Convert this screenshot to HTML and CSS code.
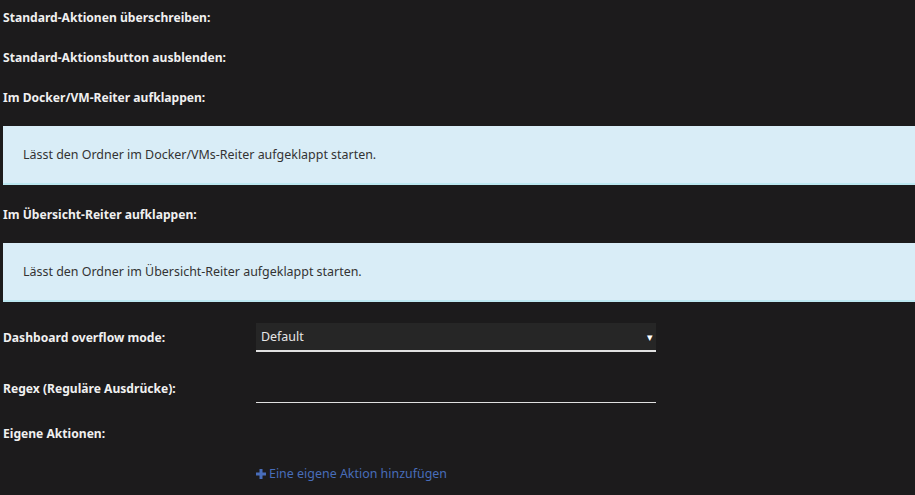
FILE: index.html
```html
<!DOCTYPE html>
<html lang="de">
<head>
  <meta charset="UTF-8">
  <title>Ordner-Einstellungen</title>
  <link rel="stylesheet" href="styles.css">
</head>
<body>
  <form class="settings">
    <div class="field"><span class="label">Standard-Aktionen überschreiben:</span></div>
    <div class="field"><span class="label">Standard-Aktionsbutton ausblenden:</span></div>
    <div class="field"><span class="label">Im Docker/VM-Reiter aufklappen:</span></div>
    <div class="info">Lässt den Ordner im Docker/VMs-Reiter aufgeklappt starten.</div>

    <div class="field field-spaced"><span class="label">Im Übersicht-Reiter aufklappen:</span></div>
    <div class="info">Lässt den Ordner im Übersicht-Reiter aufgeklappt starten.</div>

    <div class="field-row select-row">
      <span class="label">Dashboard overflow mode:</span>
      <div class="select">
        <span>Default</span>
        <span class="arrow">▾</span>
      </div>
    </div>

    <div class="field-row input-row">
      <span class="label">Regex (Reguläre Ausdrücke):</span>
      <div class="text-input"></div>
    </div>

    <div class="field custom-label"><span class="label">Eigene Aktionen:</span></div>

    <div class="add-row">
      <a class="add-action" href="#">
        <svg width="10" height="10" viewBox="0 0 10 10"><path d="M3.5 0h3v3.5H10v3H6.5V10h-3V6.5H0v-3h3.5z" fill="currentColor"/></svg>
        Eine eigene Aktion hinzufügen
      </a>
    </div>
  </form>
</body>
</html>
```

FILE: styles.css
```css
* {
  margin: 0;
  padding: 0;
  box-sizing: border-box;
}

body {
  background: #1c1b1c;
  color: #f2f2f2;
  font-family: 'Noto Sans', 'Open Sans', sans-serif;
  font-size: 12.45px;
  overflow: hidden;
}

.settings {
  padding-left: 3px;
}

.label {
  font-weight: bold;
  font-size: 12.1px;
  line-height: 14px;
  color: #f0f0f0;
}

.field {
  padding: 11px 0 15px;
  line-height: 14px;
}

.field-spaced {
  padding: 23px 0 15px;
}

.info {
  margin-top: 6px;
  height: 59px;
  display: flex;
  align-items: center;
  padding: 0 20px;
  background: #d9edf7;
  border-bottom: 2px solid #bce8f1;
  color: #333;
}

.field-row {
  display: flex;
  align-items: center;
}

.field-row .label {
  width: 253px;
  flex-shrink: 0;
}

.select-row {
  margin-top: 21px;
}

.input-row {
  margin-top: 22px;
}

.select {
  width: 400px;
  height: 29px;
  display: flex;
  align-items: center;
  justify-content: space-between;
  padding: 0 3px 0 5px;
  background: #262626;
  border-bottom: 2px solid #e0e0e0;
  color: #e6e6e6;
}

.arrow {
  font-size: 11px;
  color: #fff;
}

.text-input {
  width: 400px;
  height: 29px;
  border-bottom: 1px solid #e0e0e0;
}

.custom-label {
  padding-top: 24px;
  padding-bottom: 0;
}

.add-row {
  padding: 24px 0 0 253px;
}

.add-action {
  color: #486dba;
  text-decoration: none;
  display: inline-flex;
  align-items: center;
  gap: 3px;
}
```
